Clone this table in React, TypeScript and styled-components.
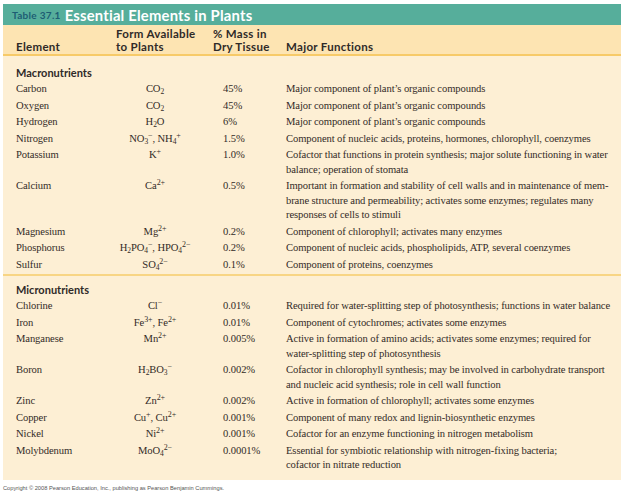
import React from "react";
import styled, { createGlobalStyle } from "styled-components";

const Global = createGlobalStyle`
  html, body { margin: 0; padding: 0; background: #ffffff; }
  body { width: 625px; height: 492px; overflow: hidden; }
`;

const Page = styled.div`
  padding: 4px 4px 0 3px;
`;

const Panel = styled.div`
  width: 618px;
  background: #fdefd4;
`;

const TitleBar = styled.div`
  height: 21px;
  background: #56ae9b;
  display: flex;
  align-items: center;
  gap: 4px;
  padding-left: 9px;
  font-family: Lato, "Open Sans", sans-serif;
  font-weight: 700;
`;

const TableNo = styled.span`
  color: #1d5d73;
  font-size: 10px;
  letter-spacing: 0.3px;
  padding-top: 1px;
`;

const TitleText = styled.span`
  color: #ffffff;
  font-size: 14.8px;
  letter-spacing: 0.2px;
`;

const Grid = styled.div`
  display: grid;
  grid-template-columns: 94px 90px 86px 1fr;
  padding: 0 9px 0 13px;
`;

const HeaderRow = styled(Grid)`
  background: #fde4b2;
  border-bottom: 2px solid #f7ca68;
  padding-top: 2px;
  padding-bottom: 1px;
  align-items: end;
  font-family: Lato, "Open Sans", sans-serif;
  font-weight: 700;
  font-size: 11.5px;
  letter-spacing: 0.3px;
  line-height: 13px;
  color: #2f2a28;
`;

const HeadCell = styled.div<{ $indent?: number }>`
  padding-left: ${(p) => p.$indent ?? 0}px;
`;

const Body = styled.div`
  padding: 4px 0 6px;
`;

const Section = styled.div<{ $divider?: boolean }>`
  border-bottom: ${(p) => (p.$divider ? "2px solid #f8d584" : "none")};
  padding-bottom: ${(p) => (p.$divider ? "1px" : "0")};
  & + & {
    padding-top: 1px;
  }
`;

const SectionHead = styled.div`
  padding: 6px 0 1px 13px;
  font-family: Lato, "Open Sans", sans-serif;
  font-weight: 700;
  font-size: 11px;
  line-height: 14px;
  color: #2f2a28;
`;

const Row = styled(Grid)`
  padding-top: 1px;
  padding-bottom: 1px;
  font-family: "Liberation Serif", "Times New Roman", serif;
  font-size: 10.6px;
  letter-spacing: -0.1px;
  line-height: 14.5px;
  color: #332b27;
  align-items: start;
`;

const Cell = styled.div<{ $align?: "left" | "center"; $indent?: number }>`
  text-align: ${(p) => p.$align ?? "left"};
  padding-left: ${(p) => p.$indent ?? 0}px;
  white-space: nowrap;
`;

const Sub = styled.sub`
  font-size: 7.5px;
  line-height: 0;
  vertical-align: -2px;
`;

const Sup = styled.sup`
  font-size: 8px;
  line-height: 0;
  vertical-align: 4px;
`;

const Copyright = styled.div`
  margin-top: 4px;
  font-family: "Liberation Sans", Arial, sans-serif;
  font-size: 5.7px;
  line-height: 8px;
  color: #555555;
`;

type Item = {
  name: string;
  form: React.ReactNode;
  mass: string;
  fn: string[];
};

const organic = "Major component of plant’s organic compounds";

const macro: Item[] = [
  { name: "Carbon", form: <>CO<Sub>2</Sub></>, mass: "45%", fn: [organic] },
  { name: "Oxygen", form: <>CO<Sub>2</Sub></>, mass: "45%", fn: [organic] },
  { name: "Hydrogen", form: <>H<Sub>2</Sub>O</>, mass: "6%", fn: [organic] },
  {
    name: "Nitrogen",
    form: <>NO<Sub>3</Sub><Sup>−</Sup>, NH<Sub>4</Sub><Sup>+</Sup></>,
    mass: "1.5%",
    fn: ["Component of nucleic acids, proteins, hormones, chlorophyll, coenzymes"],
  },
  {
    name: "Potassium",
    form: <>K<Sup>+</Sup></>,
    mass: "1.0%",
    fn: [
      "Cofactor that functions in protein synthesis; major solute functioning in water",
      "balance; operation of stomata",
    ],
  },
  {
    name: "Calcium",
    form: <>Ca<Sup>2+</Sup></>,
    mass: "0.5%",
    fn: [
      "Important in formation and stability of cell walls and in maintenance of mem-",
      "brane structure and permeability; activates some enzymes; regulates many",
      "responses of cells to stimuli",
    ],
  },
  {
    name: "Magnesium",
    form: <>Mg<Sup>2+</Sup></>,
    mass: "0.2%",
    fn: ["Component of chlorophyll; activates many enzymes"],
  },
  {
    name: "Phosphorus",
    form: <>H<Sub>2</Sub>PO<Sub>4</Sub><Sup>−</Sup>, HPO<Sub>4</Sub><Sup>2−</Sup></>,
    mass: "0.2%",
    fn: ["Component of nucleic acids, phospholipids, ATP, several coenzymes"],
  },
  {
    name: "Sulfur",
    form: <>SO<Sub>4</Sub><Sup>2−</Sup></>,
    mass: "0.1%",
    fn: ["Component of proteins, coenzymes"],
  },
];

const micro: Item[] = [
  {
    name: "Chlorine",
    form: <>Cl<Sup>−</Sup></>,
    mass: "0.01%",
    fn: ["Required for water-splitting step of photosynthesis; functions in water balance"],
  },
  {
    name: "Iron",
    form: <>Fe<Sup>3+</Sup>, Fe<Sup>2+</Sup></>,
    mass: "0.01%",
    fn: ["Component of cytochromes; activates some enzymes"],
  },
  {
    name: "Manganese",
    form: <>Mn<Sup>2+</Sup></>,
    mass: "0.005%",
    fn: [
      "Active in formation of amino acids; activates some enzymes; required for",
      "water-splitting step of photosynthesis",
    ],
  },
  {
    name: "Boron",
    form: <>H<Sub>2</Sub>BO<Sub>3</Sub><Sup>−</Sup></>,
    mass: "0.002%",
    fn: [
      "Cofactor in chlorophyll synthesis; may be involved in carbohydrate transport",
      "and nucleic acid synthesis; role in cell wall function",
    ],
  },
  {
    name: "Zinc",
    form: <>Zn<Sup>2+</Sup></>,
    mass: "0.002%",
    fn: ["Active in formation of chlorophyll; activates some enzymes"],
  },
  {
    name: "Copper",
    form: <>Cu<Sup>+</Sup>, Cu<Sup>2+</Sup></>,
    mass: "0.001%",
    fn: ["Component of many redox and lignin-biosynthetic enzymes"],
  },
  {
    name: "Nickel",
    form: <>Ni<Sup>2+</Sup></>,
    mass: "0.001%",
    fn: ["Cofactor for an enzyme functioning in nitrogen metabolism"],
  },
  {
    name: "Molybdenum",
    form: <>MoO<Sub>4</Sub><Sup>2−</Sup></>,
    mass: "0.0001%",
    fn: [
      "Essential for symbiotic relationship with nitrogen-fixing bacteria;",
      "cofactor in nitrate reduction",
    ],
  },
];

const ElementRow = ({ item }: { item: Item }) => (
  <Row>
    <Cell>{item.name}</Cell>
    <Cell $align="center">{item.form}</Cell>
    <Cell $indent={23}>{item.mass}</Cell>
    <Cell>
      {item.fn.map((line, i) => (
        <React.Fragment key={i}>
          {i > 0 && <br />}
          {line}
        </React.Fragment>
      ))}
    </Cell>
  </Row>
);

export default function App() {
  return (
    <Page>
      <Global />
      <Panel>
        <TitleBar>
          <TableNo>Table 37.1</TableNo>
          <TitleText>Essential Elements in Plants</TitleText>
        </TitleBar>
        <HeaderRow>
          <HeadCell>Element</HeadCell>
          <HeadCell $indent={6}>
            Form Available
            <br />
            to Plants
          </HeadCell>
          <HeadCell $indent={13}>
            % Mass in
            <br />
            Dry Tissue
          </HeadCell>
          <HeadCell>Major Functions</HeadCell>
        </HeaderRow>
        <Body>
          <Section $divider>
            <SectionHead>Macronutrients</SectionHead>
            {macro.map((m) => (
              <ElementRow key={m.name} item={m} />
            ))}
          </Section>
          <Section>
            <SectionHead>Micronutrients</SectionHead>
            {micro.map((m) => (
              <ElementRow key={m.name} item={m} />
            ))}
          </Section>
        </Body>
      </Panel>
      <Copyright>
        Copyright © 2008 Pearson Education, Inc., publishing as Pearson Benjamin Cummings.
      </Copyright>
    </Page>
  );
}
